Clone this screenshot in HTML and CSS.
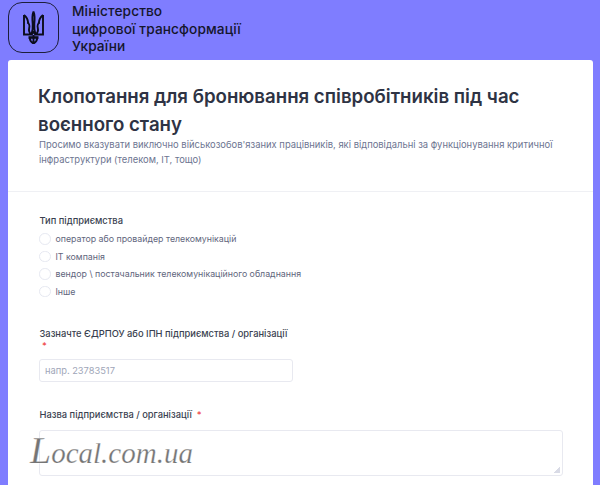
FILE: index.html
```html
<!DOCTYPE html>
<html lang="uk">
<head>
<meta charset="utf-8">
<title>Клопотання</title>
<link rel="stylesheet" href="styles.css">
</head>
<body>
<header class="top">
  <div class="logo">
    <svg class="trident" viewBox="0 0 21 33" width="21" height="33" fill="none" stroke="#0c0d1c" stroke-width="1.9">
      <path d="M10.5 0.5C9 4 9.2 8 9.7 13C10 17 9.6 20 8.6 23M10.5 0.5C12 4 11.8 8 11.3 13C11 17 11.4 20 12.4 23"/>
      <path d="M1 4V23.5H8.2C6 21.5 5.6 19.5 6.2 17C6.8 14.5 6 12 4.2 11.5M20 4V23.5H12.8C15 21.5 15.4 19.5 14.8 17C14.2 14.5 15 12 16.8 11.5"/>
      <path d="M1 4C3.6 6 5 9 5.2 12M20 4C17.4 6 16 9 15.8 12"/>
      <path d="M8.2 23.5L10.5 21L12.8 23.5"/>
      <path d="M5.5 26.5H15.5" stroke-width="2.6"/>
      <path d="M6.8 27C7 30 8.6 31.6 10.5 32.5C12.4 31.6 14 30 14.2 27M10.5 24V32.5"/>
    </svg>
  </div>
  <div class="org">Міністерство<br>цифрової трансформації<br>України</div>
</header>
<main class="card">
  <section class="intro">
    <h1>Клопотання для бронювання співробітників під час воєнного стану</h1>
    <p>Просимо вказувати виключно військозобов'язаних працівників, які відповідальні за функціонування критичної інфраструктури (телеком, ІТ, тощо)</p>
  </section>
  <form class="fields">
    <fieldset class="group">
      <legend class="label">Тип підприємства</legend>
      <label class="option"><span class="radio"></span>оператор або провайдер телекомунікацій</label>
      <label class="option"><span class="radio"></span>ІТ компанія</label>
      <label class="option"><span class="radio"></span>вендор \ постачальник телекомунікаційного обладнання</label>
      <label class="option"><span class="radio"></span>Інше</label>
    </fieldset>
    <div class="field code">
      <label class="label narrow">Зазначте ЄДРПОУ або ІПН підприємства / організації <span class="req">&nbsp;*</span></label>
      <input class="input" type="text" placeholder="напр. 23783517">
    </div>
    <div class="field name">
      <label class="label">Назва підприємства / організації &nbsp;<span class="req">*</span></label>
      <textarea class="area"></textarea>
    </div>
  </form>
</main>
<div class="mark"><span class="mark-cap">L</span>ocal.com.ua</div>
</body>
</html>
```
FILE: styles.css
```css
* { box-sizing: border-box; }
html, body { margin: 0; height: 485px; overflow: hidden; }
body {
  background: #7f7dff;
  font-family: Inter, "Noto Sans", sans-serif;
  color: #2b3040;
  position: relative;
}
.top { height: 60px; padding: 2px 8px 0; display: flex; gap: 13px; }
.logo {
  width: 51px; height: 51px;
  border: 1px solid #1d1e3a;
  border-radius: 14px;
  display: flex; align-items: center; justify-content: center;
}
.org {
  padding-top: 1px;
  font-size: 13.7px;
  font-weight: 500;
  line-height: 17.7px;
  color: #15162c;
  letter-spacing: 0.1px;
}
.card {
  margin: 0 7px 0 8px;
  height: 425px;
  background: #fff;
  border-radius: 3px 3px 0 0;
  overflow: hidden;
}
.intro {
  height: 132px;
  padding: 23px 31px 0;
  border-bottom: 1px solid #eff0f4;
}
h1 {
  margin: 0 0 0 -1px;
  font-size: 18.65px;
  font-weight: 600;
  line-height: 27.5px;
  color: #2e3344;
}
.intro p {
  margin: -1px 0 0;
  font-size: 9.42px;
  line-height: 15px;
  color: #6d7591;
}
.fields { padding: 23px 31px 0 31px; }
.group { border: 0; margin: 0; padding: 0; }
.label { display: block; padding: 0 0 0 0.5px; font-size: 9.35px; font-weight: 500; line-height: 12px; color: #3a3f50; }
.narrow { width: 252px; }
.group .label { margin-bottom: 3px; }
.option {
  display: flex; align-items: center; gap: 5px;
  height: 17.6px;
  font-size: 8.8px;
  color: #5f667d;
}
.radio {
  width: 11.5px; height: 11.5px;
  border: 1px solid #e6e8f1;
  border-radius: 50%;
  background: #fff;
}
.req { color: #ef4444; }
.code { margin-top: 28px; }
.input {
  display: block;
  width: 254px; height: 23px;
  margin-top: 7px;
  padding: 0 5px;
  border: 1px solid #e8e9f0;
  border-radius: 3px;
  font: 9.3px Inter, sans-serif;
}
.input::placeholder { color: #a0a6b8; }
.name { margin-top: 27px; }
.area {
  display: block;
  width: 524px; height: 46px;
  margin-top: 9px;
  border: 1px solid #e8e9f0;
  border-radius: 3px;
  resize: none;
  background: linear-gradient(135deg, transparent 50%, #d9dbe6 50%) no-repeat right 2px bottom 2px / 6px 6px;
}
.mark {
  position: absolute;
  left: 30px; top: 433px;
  font: italic 29px "Liberation Serif", serif;
  line-height: 34px;
  color: #757575;
  -webkit-text-stroke: 0.25px #fff;
}
.mark-cap { font-size: 38px; line-height: 34px; }
```
